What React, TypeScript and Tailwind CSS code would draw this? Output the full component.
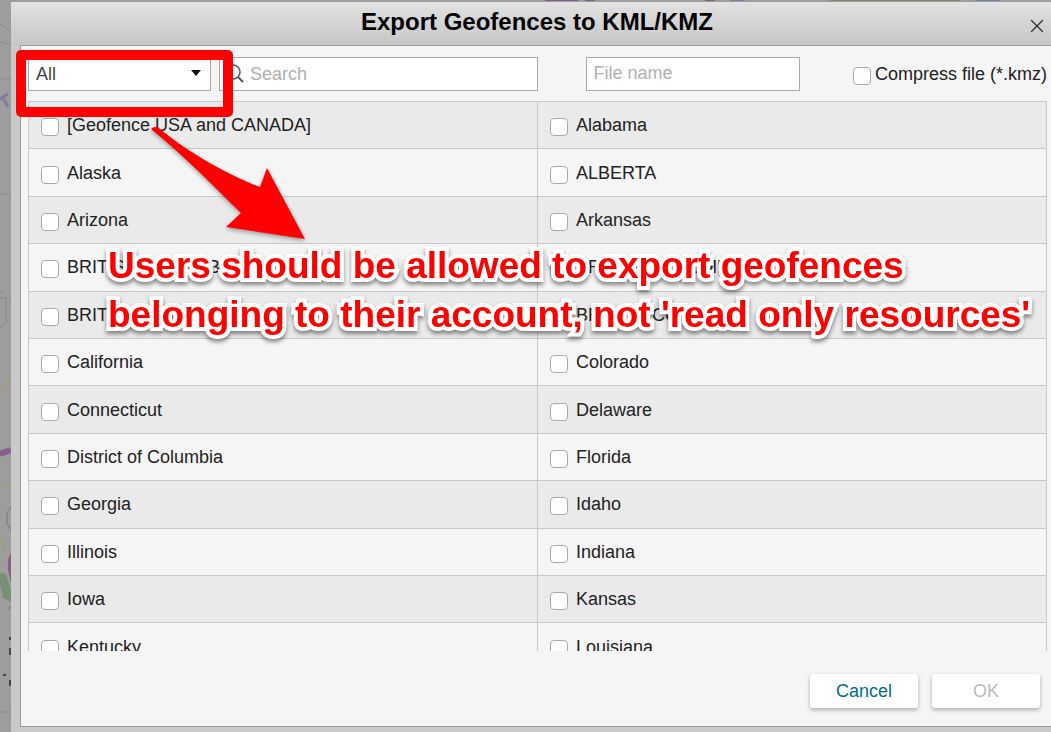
import { X } from "lucide-react";

const rows: [string, string][] = [
  ["[Geofence USA and CANADA]", "Alabama"],
  ["Alaska", "ALBERTA"],
  ["Arizona", "Arkansas"],
  ["BRITISH COLUMBIA", "BRITISH COLUMBIA"],
  ["BRITISH COLUMBIA", "BRITISH COLUMBIA"],
  ["California", "Colorado"],
  ["Connecticut", "Delaware"],
  ["District of Columbia", "Florida"],
  ["Georgia", "Idaho"],
  ["Illinois", "Indiana"],
  ["Iowa", "Kansas"],
  ["Kentucky", "Louisiana"],
];

function Checkbox() {
  return (
    <input
      type="checkbox"
      className="mt-1 size-[18px] shrink-0 appearance-none rounded border border-[#a9a9a9] bg-white checked:bg-[#00688b]"
    />
  );
}

function MapBackdrop() {
  return (
    <svg
      className="absolute inset-0 h-full w-full"
      viewBox="0 0 1051 732"
      preserveAspectRatio="none"
      fill="none"
      aria-hidden="true"
    >
      <path d="M0 24L11 31M0 42L11 45" stroke="#8d8d8a" strokeWidth="1" />
      <path d="M0 79H11M0 194H11M0 298H11M0 712H11" stroke="#8b8b8b" />
      <path d="M0 100L3 97L8 94M3 97L8 107" stroke="#827ca0" strokeWidth="3" />
      <path d="M0 291L3 293M6 299V322L0 328" stroke="#85858c" />
      <path d="M0 392L8 383L11 377M0 488L11 485M0 540L6 548L2 553" stroke="#a29b7c" strokeWidth="2" />
      <path d="M0 454L11 450" stroke="#875f8a" strokeWidth="6" />
      <path d="M11 507L7 512V523L11 530" stroke="#666" strokeWidth="1" strokeDasharray="2 1" />
      <path d="M11 553Q7 557 8 570L11 584Z" fill="#8b5e87" />
      <path d="M0 573L6 574L11 590V602L3 598L0 585Z" fill="#779176" />
      <path d="M8 609L11 607" stroke="#6f8ba0" strokeWidth="2" />
      <path d="M10 637V640M10 648V655M3 675H6M10 680V686" stroke="#454545" strokeWidth="2" />
      <path d="M545 0H578M585 0H595M705 0H715" stroke="#80608a" strokeWidth="2" />
      <path d="M730 0H745M975 0H1000" stroke="#71839c" strokeWidth="2" />
      <path d="M830 0H960" stroke="#85886d" strokeWidth="2" />
    </svg>
  );
}

function Annotations() {
  return (
    <div className="pointer-events-none absolute inset-0 z-10">
      <div className="absolute left-4 top-[50px] h-[67px] w-[217px] rounded-[5px] border-[10px] border-[#ff0000]" />
      <svg
        className="absolute left-[140px] top-[120px] h-[130px] w-[180px] drop-shadow-[0_2px_2px_rgba(0,0,0,0.35)]"
        viewBox="140 120 180 130"
        aria-hidden="true"
      >
        <path
          d="M151 129Q155 125 160 129C184 149 225 174 260 187L267 168L305 239L226 227L241 213C216 189 188 159 151 129Z"
          fill="#ff0000"
        />
      </svg>
      <p className="absolute left-[108px] top-[241px] whitespace-nowrap text-[37px] leading-[49px] font-bold text-[#ff0000] [-webkit-text-stroke:8px_white] [paint-order:stroke_fill] drop-shadow-[0_3px_2px_rgba(0,0,0,0.45)]">
        Users should be allowed to export geofences
        <br />
        belonging to their account, not 'read only resources'
      </p>
    </div>
  );
}

export default function App() {
  return (
    <div className="relative flex h-screen flex-col overflow-hidden bg-[#9d9d9d] pt-[2px] pl-[11px] font-['Liberation_Sans',Arial,sans-serif] text-lg text-[#222]">
      <MapBackdrop />
      <section
        role="dialog"
        aria-labelledby="dialog-title"
        className="relative flex min-h-0 flex-1 flex-col bg-[#c9c9c9] pb-[5px]"
      >
        <header className="flex h-[43px] shrink-0 items-start bg-linear-to-b from-[#e2e2e2] to-[#c6c6c6] pl-12">
          <h1 id="dialog-title" className="flex-1 text-center text-2xl leading-10 font-bold text-black">
            Export Geofences to KML/KMZ
          </h1>
          <button type="button" aria-label="Close" className="flex h-10 w-9 items-center justify-center pt-2 pl-2">
            <X className="size-[22px] text-[#333]" strokeWidth={1.5} />
          </button>
        </header>

        <div className="ml-[9px] flex min-h-0 flex-1 flex-col border-t border-b border-l border-[#999] bg-[#f5f5f5] pr-1 pl-[7px]">
          <div className="grid h-[55px] shrink-0 grid-cols-2 items-center">
            <div className="flex gap-2">
              <div className="relative w-[183px]">
                <select
                  aria-label="Resource"
                  className="h-[34px] w-full appearance-none border border-[#a9a9a9] bg-white px-[7px] text-[#444]"
                >
                  <option>All</option>
                </select>
                <svg
                  className="pointer-events-none absolute top-3 right-[9px] h-2 w-3"
                  viewBox="0 0 12 8"
                  aria-hidden="true"
                >
                  <path d="M1 1H11L6 7Z" fill="#111" />
                </svg>
              </div>
              <label className="flex h-[34px] min-w-0 flex-1 items-center border border-[#a9a9a9] bg-white pl-2">
                <svg className="size-[22px] shrink-0" viewBox="0 0 22 22" fill="none" aria-hidden="true">
                  <circle cx="5" cy="9" r="7" stroke="#555" strokeWidth="1.5" />
                  <path d="M10 14L15 19" stroke="#555" strokeWidth="2" />
                </svg>
                <input
                  type="text"
                  aria-label="Search"
                  placeholder="Search"
                  className="w-full min-w-0 bg-transparent outline-none placeholder:text-[#b0b0b0]"
                />
              </label>
            </div>
            <div className="flex items-center justify-between pl-12">
              <input
                type="text"
                aria-label="File name"
                placeholder="File name"
                className="h-[34px] w-[214px] border border-[#a9a9a9] bg-white px-[7px] outline-none placeholder:text-[#b0b0b0]"
              />
              <label className="flex items-center gap-1 whitespace-nowrap">
                <Checkbox />
                Compress file (*.kmz)
              </label>
            </div>
          </div>

          <div className="min-h-0 flex-1 overflow-hidden">
            <table className="h-[570px] w-full table-fixed border-collapse">
              <tbody>
                {rows.map((row, i) => (
                  <tr key={i} className="odd:bg-[#eaeaea] even:bg-[#f5f5f5]">
                    {row.map((name, j) => (
                      <td key={j} className="border border-[#c8c8c8] p-0 pl-3">
                        <label className="flex items-center gap-2">
                          <Checkbox />
                          {name}
                        </label>
                      </td>
                    ))}
                  </tr>
                ))}
              </tbody>
            </table>
          </div>

          <footer className="flex h-[75px] shrink-0 items-center justify-end gap-[14px] pr-[7px]">
            <button
              type="button"
              className="mt-1 h-[34px] w-[108px] rounded-[3px] bg-white text-[#006b8e] shadow-[0_2px_4px_rgba(0,0,0,0.3)]"
            >
              Cancel
            </button>
            <button
              type="button"
              disabled
              className="mt-1 h-[34px] w-[108px] rounded-[3px] bg-white text-[#bbb] shadow-[0_2px_4px_rgba(0,0,0,0.3)]"
            >
              OK
            </button>
          </footer>
        </div>
      </section>
      <Annotations />
    </div>
  );
}
